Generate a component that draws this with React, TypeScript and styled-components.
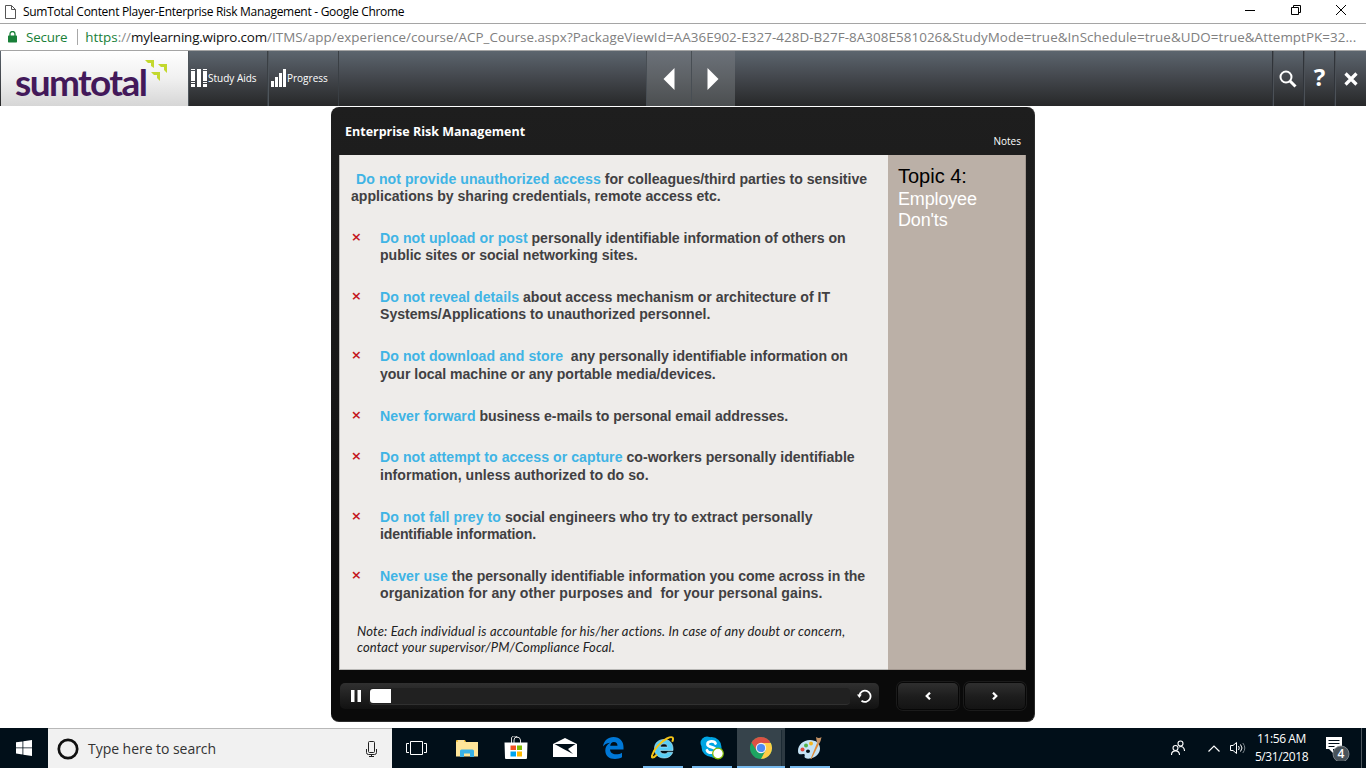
import React from 'react';
import styled, { createGlobalStyle } from 'styled-components';

const GlobalStyle = createGlobalStyle`
  * { box-sizing: border-box; }
  body { margin: 0; background: #fff; overflow: hidden; }
  svg { display: block; flex: none; }
`;

const ui = `"Open Sans", "Noto Sans", sans-serif`;
const arial = `"Liberation Sans", Arial, sans-serif`;

const Desktop = styled.div`
  width: 1366px;
  height: 768px;
  display: flex;
  flex-direction: column;
  font-family: ${ui};
`;

/* Browser window */
const TitleBar = styled.header`
  height: 24px;
  flex: none;
  display: flex;
  align-items: center;
  padding-left: 5px;
  border-bottom: 1px solid #a5a5a5;
`;
const WindowTitle = styled.div`
  flex: 1;
  margin-left: 7px;
  font-size: 12px;
  letter-spacing: -0.29px;
  color: #000;
`;
const WindowButtons = styled.div`
  display: flex;
  gap: 35.5px;
  padding: 0 20px 3px 0;
`;
const AddressBar = styled.div`
  height: 27px;
  flex: none;
  display: flex;
  align-items: center;
  padding-left: 8px;
  border-bottom: 1px solid #a5a5a5;
  font-size: 13.4px;
  white-space: nowrap;
`;
const Secure = styled.span`
  margin-left: 9px;
  letter-spacing: -0.2px;
  color: #188038;
`;
const AddressDivider = styled.span`
  width: 1px;
  height: 16px;
  margin: 0 7px 0 10px;
  background: #a8a8a8;
`;
const UrlPart = styled.span<{ $color: string; $tracking: number }>`
  color: ${p => p.$color};
  letter-spacing: ${p => p.$tracking}px;
`;

/* Course toolbar */
const Toolbar = styled.nav`
  height: 55px;
  flex: none;
  display: flex;
  padding-left: 1px;
  background: linear-gradient(#5c656e 0%, #45494f 45%, #272829 100%);
`;
const Logo = styled.div`
  width: 187px;
  display: flex;
  align-items: flex-start;
  padding-left: 14px;
  background: linear-gradient(#fff, #f0f0f0 50%, #d6d6d6);
`;
const LogoText = styled.span`
  width: 130px;
  margin-top: 8px;
  font: 700 37px/45px Lato, sans-serif;
  letter-spacing: -1.6px;
  color: #43195a;
`;
const LogoMark = styled.svg`
  margin-top: 9px;
`;
const ToolButton = styled.div<{ $width: number }>`
  width: ${p => p.$width}px;
  display: flex;
  align-items: center;
  gap: 1px;
  padding: 0 0 2px 3px;
  border-right: 1px solid #3a3f44;
  box-shadow: inset 1px 0 #4e555b;
  color: #fff;
  font-size: 10px;
  font-weight: 500;
`;
const PagerGroup = styled.div`
  display: flex;
  margin-left: 307px;
`;
const PagerButton = styled.div`
  width: 44.5px;
  display: flex;
  align-items: center;
  justify-content: center;
  border-left: 1px solid #484e54;
  background: linear-gradient(#6b7179, #5d6165 50%, #4b4e50);
`;
const ToolActions = styled.div`
  display: flex;
  margin-left: auto;
`;
const ToolAction = styled.div<{ $width?: number }>`
  width: ${p => p.$width ?? 31}px;
  display: flex;
  align-items: center;
  justify-content: center;
  border-left: 1px solid #30343a;
  box-shadow: inset 1px 0 #4c5157;
`;
const HelpMark = styled.span`
  margin: 0 0 3px 1px;
  color: #fff;
  font: 700 24px/30px "Noto Sans", sans-serif;
`;

/* Player */
const Stage = styled.main`
  flex: 1;
  display: flex;
  justify-content: center;
  align-items: flex-start;
  padding-top: 1px;
`;
const Player = styled.section`
  width: 704px;
  height: 615px;
  padding: 0 8px;
  display: flex;
  flex-direction: column;
  border: solid #2b2b2b;
  border-width: 0 1px 1px 0;
  border-radius: 8px;
  background: linear-gradient(#1e1e1e, #181818 45%, #0a0a0a 92%);
`;
const PlayerHeader = styled.div`
  height: 48px;
  display: flex;
  justify-content: space-between;
  padding: 0 5px 0 6px;
  color: #fff;
`;
const CourseTitle = styled.h1`
  margin: 16px 0 0;
  font-size: 12.5px;
  line-height: 18px;
  font-weight: 700;
`;
const NotesLink = styled.span`
  margin-top: 26px;
  font-size: 10px;
  line-height: 17px;
`;
const Slide = styled.div`
  height: 515px;
  display: flex;
`;
const Body = styled.article`
  width: 549px;
  padding: 15.6px 0 0 11px;
  border-left: 1px solid #b9b8b6;
  border-bottom: 1px solid #b9b8b6;
  background: #eeecea;
  color: #414042;
  font: 700 14.1px/17.3px ${arial};
`;
const Rules = styled.div`
  display: flex;
  flex-direction: column;
  gap: 24.65px;
`;
const Rule = styled.div`
  display: flex;
`;
const Cross = styled.span`
  width: 29px;
  padding-left: 0.5px;
  color: #c4161c;
  font: 600 17px/14px "Open Sans", sans-serif;
`;
const Line = styled.div<{ $tracking?: number; $indent?: number }>`
  height: 17.3px;
  padding-left: ${p => p.$indent ?? 0}px;
  white-space: pre;
  letter-spacing: ${p => p.$tracking ?? 0}px;
`;
const Key = styled.span`
  color: #40b4e5;
  letter-spacing: 0.06px;
`;
const Footnote = styled.div`
  margin: 20px 0 0 6px;
  color: #222;
  font: italic 400 13px/16px Lato, sans-serif;
`;
const NoteLine = styled.div<{ $tracking: number }>`
  white-space: nowrap;
  letter-spacing: ${p => p.$tracking}px;
`;
const Topic = styled.aside`
  width: 138px;
  padding: 9px 0 0 10px;
  border: solid #a1968e;
  border-width: 0 1px 1px 0;
  background: #bbb0a7;
  font-family: ${arial};
`;
const TopicNumber = styled.div`
  font-size: 20px;
  line-height: 25px;
  color: #000;
`;
const TopicName = styled.div`
  font-size: 18px;
  line-height: 21px;
  letter-spacing: -0.15px;
  color: #fff;
`;
const Controls = styled.div`
  display: flex;
  align-items: center;
  padding: 13px 0 0 1px;
`;
const SeekBar = styled.div`
  width: 539px;
  height: 26px;
  display: flex;
  align-items: center;
  padding: 0 7px 0 11px;
  border-radius: 5px;
  background: linear-gradient(#303030, #1d1d1d 60%, #121212);
`;
const Track = styled.div`
  width: 482px;
  height: 17px;
  margin: 0 7px 0 8px;
  padding: 1px;
  border-radius: 4px;
  border-bottom: 1px solid #303030;
  background: #212121;
`;
const Played = styled.div`
  width: 21px;
  height: 14px;
  border-radius: 3px 0 0 3px;
  background: #fff;
`;
const StepButton = styled.div<{ $gap: number }>`
  width: 60px;
  height: 26px;
  margin-left: ${p => p.$gap}px;
  display: flex;
  align-items: center;
  justify-content: center;
  border-radius: 5px;
  background: linear-gradient(#2f2f2f, #1c1c1c 55%, #141414);
  box-shadow: 0 0 0 1px #070707, 0 0 0 2px #1b1b1b;
`;

/* Taskbar */
const Taskbar = styled.footer`
  height: 40px;
  flex: none;
  display: flex;
  background: #010f19;
  color: #fff;
`;
const Start = styled.div`
  width: 48px;
  display: flex;
  align-items: center;
  justify-content: center;
`;
const Search = styled.div`
  width: 344px;
  display: flex;
  align-items: center;
  padding: 0 15px 0 9px;
  border-top: 1px solid #b8b8b8;
  background: #f1f1f1;
  color: #333;
  font-size: 14px;
`;
const SearchText = styled.span`
  flex: 1;
  margin-left: 9px;
  letter-spacing: -0.04px;
`;
const TaskView = styled.div`
  width: 50px;
  display: flex;
  align-items: center;
  padding-left: 14px;
`;
const TaskApp = styled.div<{ $open?: boolean; $active?: boolean }>`
  width: ${p => (p.$active ? 48 : p.$open ? 40 : 49)}px;
  margin: ${p => (p.$active ? '0 0 0 1px' : p.$open ? '0 4px 0 5px' : '0')};
  display: flex;
  align-items: center;
  justify-content: center;
  border-bottom: 2px solid ${p => (p.$open || p.$active ? '#76b9ed' : 'transparent')};
  border-top: 2px solid ${p => (p.$active ? '#36434b' : 'transparent')};
  background: ${p => (p.$active ? 'linear-gradient(90deg,#36434b 44px,#1b2a33 44px,#1b2a33 45px,#2d3a42 45px)' : 'none')};
`;
const Tray = styled.div`
  flex: 1;
  display: flex;
  align-items: center;
  justify-content: flex-end;
`;
const TrayItem = styled.div<{ $gap: number }>`
  margin-right: ${p => p.$gap}px;
`;
const Clock = styled.div`
  width: 54px;
  margin-right: 16.5px;
  text-align: center;
  font-size: 12px;
  line-height: 18px;
  letter-spacing: -0.4px;
  padding-bottom: 1px;
  white-space: nowrap;
`;
const PeekEdge = styled.div`
  width: 5px;
  height: 40px;
  border-left: 1px solid #4d575e;
`;

const rules: { key: string; rest: string; next?: string; t1?: number; t2?: number }[] = [
  { key: 'Do not upload or post', rest: ' personally identifiable information of others on', next: 'public sites or social networking sites.', t1: -0.03, t2: -0.02 },
  { key: 'Do not reveal details', rest: ' about access mechanism or architecture of IT', next: 'Systems/Applications to unauthorized personnel.', t1: 0, t2: -0.02 },
  { key: 'Do not download and store', rest: '  any personally identifiable information on', next: 'your local machine or any portable media/devices.', t1: -0.06, t2: -0.04 },
  { key: 'Never forward', rest: ' business e-mails to personal email addresses.', t1: -0.05 },
  { key: 'Do not attempt to access or capture', rest: ' co-workers personally identifiable', next: 'information, unless authorized to do so.', t1: 0.01, t2: 0.02 },
  { key: 'Do not fall prey to', rest: ' social engineers who try to extract personally', next: 'identifiable information.', t1: 0.03, t2: -0.15 },
  { key: 'Never use', rest: ' the personally identifiable information you come across in the', next: 'organization for any other purposes and  for your personal gains.', t1: -0.04, t2: 0.06 },
];

export default function App() {
  return (
    <Desktop>
      <GlobalStyle />
      <TitleBar>
        <svg width="11" height="14" viewBox="0 0 11 14" fill="#fff" stroke="#555"><path d="M.5.5h6l4 4v9H.5zM6.5.5v4h4" /></svg>
        <WindowTitle>SumTotal Content Player-Enterprise Risk Management - Google Chrome</WindowTitle>
        <WindowButtons>
          <svg width="10" height="10" stroke="#000"><path d="M0 5.5h10" /></svg>
          <svg width="10" height="10" stroke="#000" fill="none"><path d="M.5 2.5h7v7h-7zM2.5 2.5v-2h7v7h-2" /></svg>
          <svg width="10" height="10" stroke="#000"><path d="M0 0l10 10M10 0L0 10" /></svg>
        </WindowButtons>
      </TitleBar>
      <AddressBar>
        <svg width="9" height="12" viewBox="0 0 9 12"><path d="M2 5.5V3a2.5 2.5 0 0 1 5 0v2.5" fill="none" stroke="#188038" strokeWidth="1.3" /><rect y="4.5" width="9" height="7" rx=".7" fill="#188038" /></svg>
        <Secure>Secure</Secure>
        <AddressDivider />
        <UrlPart $color="#188038" $tracking={0}>https</UrlPart>
        <UrlPart $color="#8a8a8a" $tracking={0}>://</UrlPart>
        <UrlPart $color="#111" $tracking={-0.17}>mylearning.wipro.com</UrlPart>
        <UrlPart $color="#808080" $tracking={0.065}>/ITMS/app/experience/course/ACP_Course.aspx?PackageViewId=AA36E902-E327-428D-B27F-8A308E581026&amp;StudyMode=true&amp;InSchedule=true&amp;UDO=true&amp;AttemptPK=32...</UrlPart>
      </AddressBar>

      <Toolbar>
        <Logo>
          <LogoText>sumtotal</LogoText>
          <LogoMark width="22" height="22" viewBox="0 0 22 22" fill="#c3d82e">
            <path d="M0 0h9v8L6 6V3H3zM13 4h9v9l-3-3V7h-3zM6 12h9v9l-3-3v-3H9z" />
          </LogoMark>
        </Logo>
        <ToolButton $width={80}>
          <svg width="16" height="18" fill="#fff"><path d="M0 0h4v1H0zM0 2h4v10H0zM0 13h4v1H0zM0 15h4v3H0zM6 0h4v18H6zM12 0h4v1h-4zM12 2h4v10h-4zM12 13h4v1h-4zM12 15h4v3h-4z" /></svg>
          Study Aids
        </ToolButton>
        <ToolButton $width={71}>
          <svg width="15" height="18" fill="#fff"><path d="M0 12h3v6H0zM4 8h3v10H4zM8 4h3v14H8zM12 0h3v18h-3z" /></svg>
          Progress
        </ToolButton>
        <PagerGroup>
          <PagerButton><svg width="12" height="22" fill="#fff"><path d="M11.500 0v22L.5 11z" /></svg></PagerButton>
          <PagerButton><svg width="12" height="22" fill="#fff"><path d="M.5 0v22l11-11z" /></svg></PagerButton>
        </PagerGroup>
        <ToolActions>
          <ToolAction><svg width="18" height="18" fill="none" stroke="#fff"><circle cx="7" cy="7" r="5.500" strokeWidth="2" /><path d="M11 11l5.500 5.500" strokeWidth="3" /></svg></ToolAction>
          <ToolAction><HelpMark>?</HelpMark></ToolAction>
          <ToolAction $width={32}><svg width="14" height="14" stroke="#fff" strokeWidth="3.200"><path d="M1.500 1.500l11 11M12.500 1.500l-11 11" /></svg></ToolAction>
        </ToolActions>
      </Toolbar>

      <Stage>
        <Player>
          <PlayerHeader>
            <CourseTitle>Enterprise Risk Management</CourseTitle>
            <NotesLink>Notes</NotesLink>
          </PlayerHeader>
          <Slide>
            <Body>
              <Rules>
                <div>
                  <Line $indent={5} $tracking={0}><Key>Do not provide unauthorized access</Key> for colleagues/third parties to sensitive</Line>
                  <Line>applications by sharing credentials, remote access etc.</Line>
                </div>
                {rules.map(r => (
                  <Rule key={r.key}>
                    <Cross>×</Cross>
                    <div>
                      <Line $tracking={r.t1}><Key>{r.key}</Key>{r.rest}</Line>
                      {r.next && <Line $tracking={r.t2}>{r.next}</Line>}
                    </div>
                  </Rule>
                ))}
              </Rules>
              <Footnote>
                <NoteLine $tracking={0.18}>Note: Each individual is accountable for his/her actions. In case of any doubt or concern,</NoteLine>
                <NoteLine $tracking={0.12}>contact your supervisor/PM/Compliance Focal.</NoteLine>
              </Footnote>
            </Body>
            <Topic>
              <TopicNumber>Topic 4:</TopicNumber>
              <TopicName>Employee<br />Don'ts</TopicName>
            </Topic>
          </Slide>
          <Controls>
            <SeekBar>
              <svg width="10" height="12" fill="#fff"><path d="M0 0h3.500v12H0zM6.500 0H10v12H6.500z" /></svg>
              <Track><Played /></Track>
              <svg width="15" height="14" viewBox="0 0 15 14" fill="none" stroke="#fff" strokeWidth="1.800"><path d="M4.500 11.700A5.600 5.600 0 1 0 2.400 6.500" /><path d="M0 5.500h4.800L2.400 9z" fill="#fff" stroke="none" /></svg>
            </SeekBar>
            <StepButton $gap={19}><svg width="6" height="8" fill="none" stroke="#fff" strokeWidth="2.200"><path d="M5 .7L1.700 4 5 7.300" /></svg></StepButton>
            <StepButton $gap={7}><svg width="6" height="8" fill="none" stroke="#fff" strokeWidth="2.200"><path d="M1 .7L4.300 4 1 7.300" /></svg></StepButton>
          </Controls>
        </Player>
      </Stage>

      <Taskbar>
        <Start><svg width="16" height="16" fill="#fff"><path d="M0 2.300l6.500-.9v6.100H0zM7.300 1.300L16 0v7.500H7.300zM0 8.300h6.500v6.200L0 13.600zM7.300 8.300H16V16l-8.700-1.300z" /></svg></Start>
        <Search>
          <svg width="22" height="22"><circle cx="11" cy="11" r="9.200" fill="none" stroke="#111" strokeWidth="2.700" /></svg>
          <SearchText>Type here to search</SearchText>
          <svg width="11" height="16" fill="none" stroke="#222"><rect x="2.500" y=".5" width="6" height="11" rx="1" /><path d="M.5 8v3.500q0 2 2 2h6q2 0 2-2V8M5.500 13.500v2M3 15.500h5" /></svg>
        </Search>
        <TaskView><svg width="21" height="14" fill="none" stroke="#fff"><path d="M4.500.5h12v13h-12zM3 2.500H.5v9H3M18 2.500h2.500v9H18" /></svg></TaskView>
        <TaskApp>
          <svg width="22" height="19"><path d="M0 2q0-1 1-1h8l1 2h11v14H0z" fill="#f5c644" /><path d="M0 3h22v14.500H0z" fill="#ffe599" /><path d="M2 1.500h6v1H2z" fill="#fff" /><path d="M4 18v-6q0-1.500 1.500-1.500h11Q18 10.500 18 12v6h-4v-3.500H8V18z" fill="#39b1e6" /></svg>
        </TaskApp>
        <TaskApp>
          <svg width="24" height="24"><path d="M7.500 7V4a3 3 0 0 1 6-2M10 7V4q0-3 3-3t3.500 3v3" fill="none" stroke="#ddd" /><path d="M.5 6.500h23L23 22q0 1-1 1H2q-1 0-1-1z" fill="#fff" /><path d="M6.500 9.500H12V14H6.500z" fill="#f25022" /><path d="M13 9.500h5V14h-5z" fill="#7fba00" /><path d="M6.500 15.500H12v5H6.500z" fill="#00a4ef" /><path d="M13 15.500h5v5h-5z" fill="#ffb900" /></svg>
        </TaskApp>
        <TaskApp>
          <svg width="24" height="20"><path d="M0 6l12-6 12 6v13H0z" fill="#fff" /><path d="M1.500 6h21L15 11l5 5-9.500-5z" fill="#010f19" /></svg>
        </TaskApp>
        <TaskApp>
          <svg width="21" height="22" viewBox="0 0 21 22"><path d="M0 9.500C1 3.500 5 0 10.500 0 17 0 20.500 4.500 20.500 10v2.500H7c.2 3.200 2.800 4.800 6 4.800 2.400 0 4.500-.7 6-1.600v4.600c-1.900 1.100-4.400 1.700-7 1.700-6 0-9.700-3.300-9.700-8.500 0-3.400 1.700-6.200 4.700-7.800C3.600 6.200 1.400 7.500 0 9.500zM7.200 8.800h7.300c0-2.300-1.200-3.900-3.600-3.900-2.100 0-3.400 1.500-3.700 3.900z" fill="#0078d7" /></svg>
        </TaskApp>
        <TaskApp $open>
          <svg width="24" height="24" viewBox="0 0 24 24"><path d="M3.500 12.500C3.500 7 7.500 3.500 13 3.500c5.800 0 9 4 9 9.500v1.500H9c.3 2.200 2 3.300 4.200 3.300 1.600 0 2.800-.5 3.500-1.600h5c-1.300 4-4.500 5.800-8.700 5.800-5.600 0-9.500-3.700-9.500-9.500zM9.200 11h7.400c-.3-2-1.600-3.200-3.600-3.200S9.500 9 9.200 11z" fill="#59cdf5" stroke="#bdefff" strokeWidth=".6" /><path d="M6 18.500C2.500 22.300-.4 23 1.400 18.500 3.500 12.500 10 5.500 16 2.500c6-3 7-.5 5.200 3.200" fill="none" stroke="#f5c518" strokeWidth="2" /></svg>
        </TaskApp>
        <TaskApp $open>
          <svg width="24" height="24" viewBox="0 0 24 24"><circle cx="7" cy="7" r="6.500" fill="#00a5e3" /><circle cx="15" cy="15" r="7" fill="#00a5e3" /><circle cx="11.500" cy="11" r="10" fill="#00a5e3" /><path d="M15.500 7.500C14.500 4.500 7.500 4.700 7.500 8.300c0 3.800 8 2 8 5.700 0 3.500-7.500 3.500-8.500.3" fill="none" stroke="#fff" strokeWidth="2.800" strokeLinecap="round" /><circle cx="18" cy="17.500" r="5.300" fill="#fff" stroke="#7fba00" strokeWidth="1.200" /></svg>
        </TaskApp>
        <TaskApp $active>
          <svg width="22" height="22" viewBox="0 0 22 22"><circle cx="11" cy="11" r="11" fill="#1da462" /><path d="M11 11L1.500 5.500A11 11 0 0 1 20.500 5.500z" fill="#dd5144" /><path d="M11 6h9.800A11 11 0 0 1 11 22l4.500-8.500z" fill="#ffcd46" /><path d="M1.500 5.500L6.500 13.500 11 11V6z" fill="#dd5144" /><circle cx="11" cy="11" r="5.200" fill="#f1f1f1" /><circle cx="11" cy="11" r="4.100" fill="#4c8bf5" /></svg>
        </TaskApp>
        <TaskApp $open>
          <svg width="24" height="24" viewBox="0 0 24 24"><path d="M12 4C5 4 0 9 0 15c0 4 3 3.500 5 3s2 1 1.500 2.500S9 23 12 22.500c6-1 10-5 10-10S18 4 12 4zM10 13.500a2 1.700 0 1 1 0 3.400 2 1.700 0 0 1 0-3.400z" fill="#c5e3f5" fillRule="evenodd" /><circle cx="4.500" cy="13.500" r="2" fill="#e2483d" /><circle cx="8" cy="9.500" r="2" fill="#53b148" /><circle cx="13" cy="7.500" r="2" fill="#f3b61f" /><path d="M12.500 23L19 7l2 1-7.500 15z" fill="#e08a35" /><path d="M18 1q3 2 5.500 0-.5 4-2.500 7l-2-1z" fill="#c79466" /></svg>
        </TaskApp>
        <Tray>
          <TrayItem $gap={23}><svg width="14" height="16" fill="none" stroke="#fff" strokeWidth="1.100"><circle cx="9.500" cy="3.500" r="2.500" /><circle cx="4.500" cy="8" r="2.500" /><path d="M.5 15c0-5.500 8-5.500 8 0M8 7c3-1.500 5.500.5 5.500 4" /></svg></TrayItem>
          <TrayItem $gap={10}><svg width="12" height="7" fill="none" stroke="#fff" strokeWidth="1.200"><path d="M.5 6.500L6 1l5.500 5.500" /></svg></TrayItem>
          <TrayItem $gap={8}><svg width="17" height="14" fill="none" stroke="#fff"><path d="M.5 4.500H3l3.500-3v11l-3.500-3H.5zM8.500 5q1.500 2 0 4M10.500 3.500q3 3.500 0 7" /><path d="M12.800 2q4 5 0 10" stroke="#7c858b" /></svg></TrayItem>
          <Clock>11:56 AM<br />5/31/2018</Clock>
          <TrayItem $gap={11}>
            <svg width="25" height="26" viewBox="0 0 25 26"><path d="M1 2h16v12H8v4l-4-4H1z" fill="#fff" /><path d="M3.500 5.500h11M3.500 8.500h11M3.500 11.500h6" stroke="#010f19" /><circle cx="16" cy="19" r="8" fill="#49535a" stroke="#8b9398" strokeWidth=".8" /><text x="16" y="23.300" textAnchor="middle" fontSize="12" fontWeight="600" fill="#fff">4</text></svg>
          </TrayItem>
          <PeekEdge />
        </Tray>
      </Taskbar>
    </Desktop>
  );
}
